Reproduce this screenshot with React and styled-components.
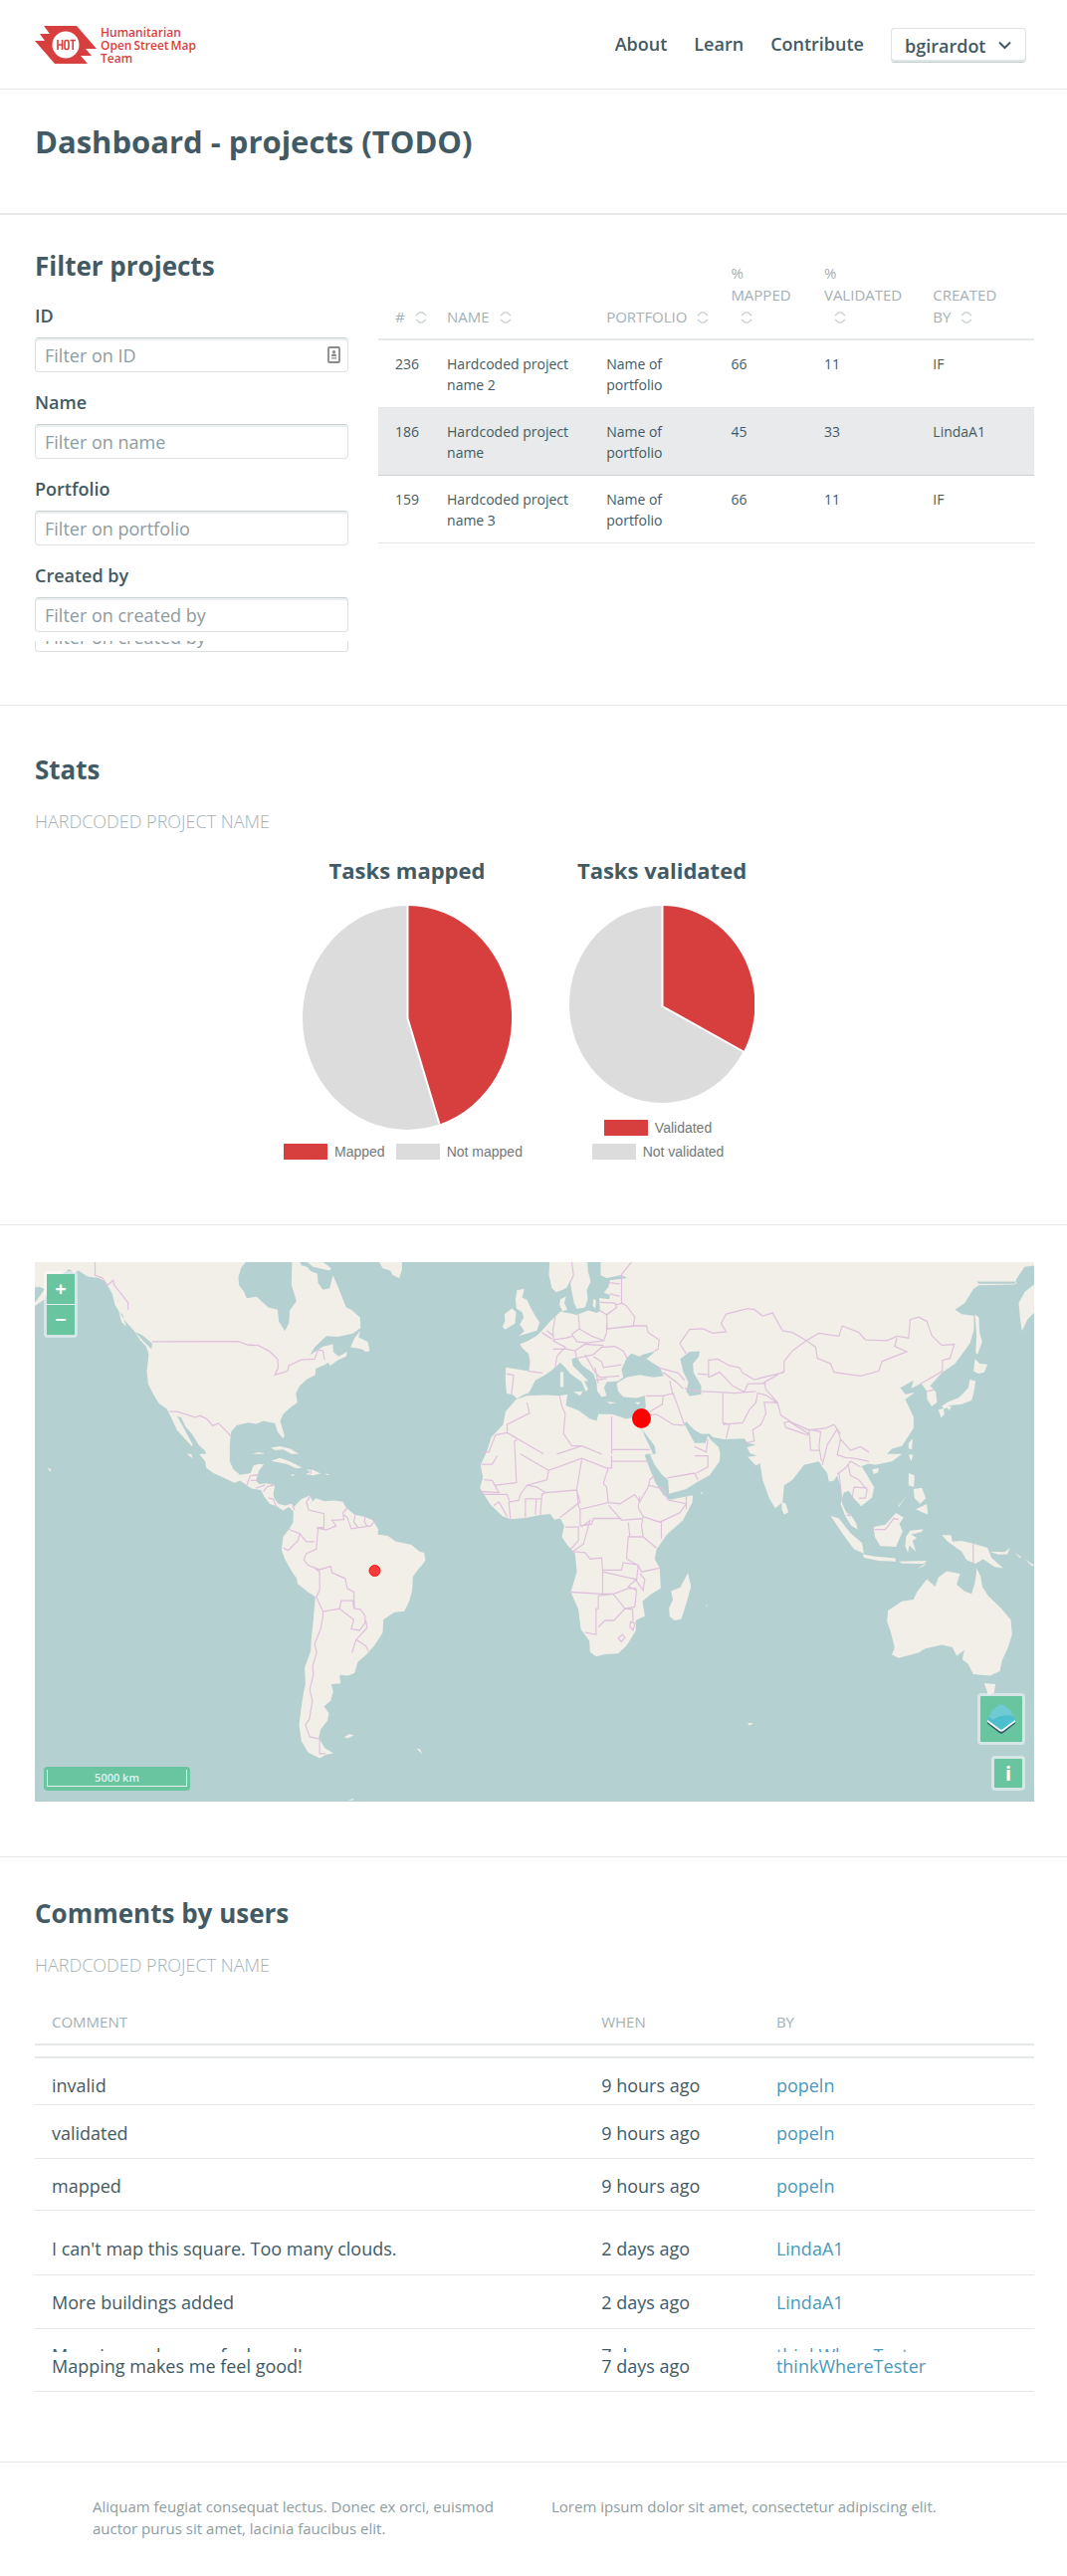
import React from "react";
import styled, { createGlobalStyle, css } from "styled-components";

const c = {
  ink: "#425a64",
  muted: "#a5b0b4",
  soft: "#8d9ca1",
  line: "#e4e8e8",
  rule: "#e6e7e7",
  red: "#d73f3f",
  grey: "#dcdcdc",
  link: "#4a9ab8",
  green: "#68c5a0",
};

const GlobalStyle = createGlobalStyle`
  *, *::before, *::after { box-sizing: border-box; }
  body {
    margin: 0;
    background: #fff;
    color: ${c.ink};
    font-family: "Open Sans", "Noto Sans", sans-serif;
    font-size: 18px;
    line-height: 24px;
  }
`;

const Header = styled.header`
  display: flex;
  justify-content: space-between;
  align-items: flex-start;
  height: 90px;
  padding: 26px 41px 0 35px;
  border-bottom: 1px solid ${c.rule};
`;

const Brand = styled.a`
  display: flex;
  gap: 4px;
  color: ${c.red};
  text-decoration: none;
`;

const BrandMark = styled.svg`
  width: 62px;
  height: 38px;
`;

const BrandText = styled.span`
  display: flex;
  flex-direction: column;
  font-size: 12px;
  font-weight: 600;
  line-height: 13px;
`;

const BrandLine = styled.span`
  display: flex;
  gap: 2px;
`;

const Nav = styled.nav`
  display: flex;
  gap: 27px;
  align-items: flex-start;
  padding-top: 2px;
`;

const NavLink = styled.a`
  color: ${c.ink};
  font-weight: 600;
  line-height: 32px;
  text-decoration: none;
`;

const UserButton = styled.button`
  display: flex;
  align-items: center;
  justify-content: space-between;
  gap: 12px;
  width: 136px;
  height: 35px;
  padding: 0 14px 0 13px;
  border: 1px solid #dde2e3;
  border-bottom-color: #c3cdce;
  border-radius: 4px;
  background: #fff;
  box-shadow: inset 0 -2px 0 #e1e6e7;
  color: ${c.ink};
  font: 600 18px/24px "Open Sans", "Noto Sans", sans-serif;
`;

const Section = styled.section`
  padding: ${(p) => p.$pad};
  border-bottom: ${(p) => p.$rule || 1}px solid ${c.rule};
`;

const PageTitle = styled.h1`
  margin: 0;
  font-size: 31px;
  line-height: 40px;
`;

const Heading = styled.h2`
  margin: 0;
  font-size: 26px;
  line-height: 36px;
`;

const ProjectName = styled.p`
  margin: 22px 0 0;
  color: ${c.muted};
  font-weight: 300;
  text-transform: uppercase;
`;

const Projects = styled.div`
  display: grid;
  grid-template-columns: 315fr 659fr;
  gap: 30px;
  align-items: start;
`;

const FieldList = styled.div`
  display: flex;
  flex-direction: column;
  gap: 18px;
  margin: 20px 0 9px;
`;

const Field = styled.div`
  display: flex;
  flex-direction: column;
  gap: 10px;
`;

const Label = styled.label`
  font-weight: 600;
`;

const inputBox = css`
  width: 100%;
  height: 35px;
  padding: 0 9px;
  border: 1px solid #dde2e2;
  border-top-color: #c8d2d2;
  border-radius: 4px;
  background: #fff;
  box-shadow: inset 0 2px 0 #eaeeee;
  font: 400 18px/24px "Open Sans", "Noto Sans", sans-serif;
`;

const InputWrap = styled.div`
  display: grid;
  align-items: center;
  > * { grid-area: 1 / 1; }
  > svg { justify-self: end; margin-right: 8px; }
`;

const Input = styled.input`
  ${inputBox}
  color: ${c.ink};
  &::placeholder { color: ${c.soft}; opacity: 1; }
`;

const InputTail = styled.div`
  display: flex;
  align-items: flex-end;
  height: 11px;
  overflow: hidden;
  color: ${c.soft};
  span {
    ${inputBox}
    flex: none;
    line-height: 39px;
  }
`;

const Table = styled.table`
  width: 100%;
  border-collapse: separate;
  border-spacing: 0;
  table-layout: fixed;
`;

const Col = styled.col`
  width: ${(p) => p.$w}%;
`;

const Th = styled.th`
  padding: 14px 0 11px 17px;
  border-bottom: 2px solid ${c.line};
  color: ${c.muted};
  font-size: 15px;
  font-weight: 400;
  line-height: 22px;
  text-align: left;
  text-transform: uppercase;
  vertical-align: bottom;
  svg { margin-left: 10px; vertical-align: -2px; }
`;

const ProjectRow = styled.tr`
  background: ${(p) => (p.$active ? "#e8eaeb" : "transparent")};
  td {
    padding: 13px 10px 12px 17px;
    border-bottom: 1px solid ${(p) => (p.$active ? "#cfd3d5" : c.rule)};
    font-size: 14px;
    line-height: 21px;
    vertical-align: top;
  }
`;

const Charts = styled.div`
  display: flex;
  justify-content: center;
  margin-top: 22px;
`;

const Chart = styled.figure`
  display: flex;
  flex-direction: column;
  align-items: center;
  width: 256px;
  margin: 0;
`;

const ChartTitle = styled.figcaption`
  margin-bottom: 21px;
  font-size: 22px;
  font-weight: 700;
  line-height: 30px;
`;

const Legend = styled.ul`
  display: flex;
  flex-wrap: wrap;
  justify-content: center;
  gap: 8px 11px;
  margin: auto 0 0;
  padding: 14px 8px 0 0;
  list-style: none;
`;

const LegendItem = styled.li`
  display: flex;
  gap: 7px;
  color: #777;
  font: 14px/16px "Liberation Sans", Arial, sans-serif;
  &::before {
    content: "";
    width: 44px;
    height: 16px;
    background: ${(p) => p.$color};
  }
`;

const MapBox = styled.div`
  position: relative;
  height: 542px;
  overflow: hidden;
  background: #b5d0d0;
`;

const MapSvg = styled.svg`
  display: block;
  width: 100%;
  height: 100%;
`;

const control = css`
  position: absolute;
  border: 3px solid rgba(255, 255, 255, 0.45);
  border-radius: 4px;
  background: ${c.green};
  background-clip: padding-box;
`;

const ZoomControl = styled.div`
  ${control}
  top: 9px;
  left: 9px;
  display: flex;
  flex-direction: column;
  gap: 1px;
  background: rgba(255, 255, 255, 0.6);
  background-clip: padding-box;
`;

const MapButton = styled.button`
  width: 28px;
  height: 30px;
  padding: 0;
  border: 0;
  background: ${c.green};
  color: #fff;
  font: 700 20px/28px "Open Sans", sans-serif;
`;

const LayersButton = styled.button`
  ${control}
  right: 9px;
  bottom: 57px;
  display: flex;
  align-items: center;
  justify-content: center;
  width: 48px;
  height: 52px;
  padding: 0;
`;

const InfoButton = styled.button`
  ${control}
  right: 9px;
  bottom: 11px;
  width: 34px;
  height: 35px;
  padding: 0;
  color: #fff;
  font: 700 20px/26px "Open Sans", sans-serif;
`;

const ScaleBar = styled.div`
  position: absolute;
  left: 9px;
  bottom: 11px;
  width: 147px;
  height: 24px;
  padding: 3px;
  border-radius: 4px;
  background: ${c.green};
  div {
    height: 17px;
    border: 1px solid #eee;
    border-top: 0;
    color: #e3f2ec;
    font-size: 11px;
    font-weight: 600;
    line-height: 16px;
    text-align: center;
  }
`;

const CommentsTable = styled(Table)`
  margin-top: 20px;
`;

const RuleRow = styled.tr`
  td {
    height: 13px;
    padding: 0;
    border-bottom: 2px solid ${c.line};
  }
`;

const CommentRow = styled.tr`
  td {
    padding: ${(p) => p.$top}px 10px ${(p) => p.$bottom}px 17px;
    border-bottom: 1px solid ${c.rule};
    vertical-align: top;
  }
`;

const Peek = styled.div`
  height: 6px;
  margin-bottom: 2px;
  overflow: hidden;
  line-height: 18px;
`;

const Link = styled.a`
  color: ${c.link};
  text-decoration: none;
`;

const Footer = styled.footer`
  display: grid;
  grid-template-columns: 1fr 1fr;
  gap: 36px;
  padding: 33px 93px 36px;
  color: ${c.soft};
  font-size: 15px;
  line-height: 22px;
  p { margin: 0; }
`;

const SortIcon = () => (
  <svg width="12" height="14" viewBox="0 0 12 14" fill="none" stroke="#cdd3d4" strokeWidth="1.6" aria-hidden="true">
    <path d="M1 5 L4.5 2 H7.5 L11 5 M1 9 L4.5 12 H7.5 L11 9" />
  </svg>
);

const ContactIcon = () => (
  <svg width="13" height="17" viewBox="0 0 13 17" aria-hidden="true">
    <rect x="1" y="1" width="11" height="15" rx="1" fill="#fff" stroke="#8b8b8b" strokeWidth="1.8" />
    <circle cx="6.5" cy="5.6" r="1.6" fill="#8b8b8b" />
    <path d="M4 10 V8.8 Q4 7.4 6.5 7.4 T9 8.8 V10 Z M4 11.2 H9 V12.6 H4 Z" fill="#8b8b8b" />
  </svg>
);

const LayersIcon = () => (
  <svg width="30" height="32" viewBox="0 0 30 32" aria-hidden="true">
    <path d="M1 19 L15 28 L29 19 V20.500 L17 30 Q15 31.500 13 30 L1 20.500Z" fill="#33576b" />
    <path d="M1 16 L15 27 L29 16 V19 L17 28 Q15 29.500 13 28 L1 19Z" fill="#eef7f8" />
    <path d="M2 14 Q0 16 2 17.500 L13 25.500 Q15 27 17 25.500 L28 17.500 Q30 16 28 14 L15 9Z" fill="#4cbfce" />
    <path d="M4 8 L8 6 Q12 1.500 15 1.500 T22 6 L26 8 L24 8.500 L28 12.500 Q12 11 7 17 L2 14 L6 8.500Z" fill="#70cad3" />
  </svg>
);

function Pie({ w, h, cx, cy, end, label }) {
  return (
    <svg width={w} height={h} viewBox={`0 0 ${w} ${h}`} role="img" aria-label={label}>
      <ellipse cx={w / 2} cy={h / 2} rx={w / 2} ry={h / 2} fill={c.grey} />
      <path d={`M${cx} ${cy} V0 A${w / 2} ${h / 2} 0 0 1 ${end[0]} ${end[1]} Z`} fill={c.red} />
      <path d={`M${cx} 0 V${cy} L${end[0]} ${end[1]}`} fill="none" stroke="#fff" strokeWidth="2" />
    </svg>
  );
}

const AMERICAS = [
  "M45 49V118L60 116 76 122 64 138 45 160 47 168 76 150 84 130 100 112 125 84 150 68 165 78 178 72 205 88 240 92 258 102 268 116 280 135 288 165 305 190 325 215 345 235 365 262 382 278 390 300 384 345 388 380 405 410 420 432 445 448 458 472 475 505 500 530 521 550 522 544 505 516 490 490 476 468 488 471 500 495 520 515 540 545 560 562 562 570H542L560 590 563 608 585 622 620 636 648 648 665 642 685 655 700 664 728 668 738 686 755 706 775 712 795 723 812 714 826 726 829 714 820 705 800 710 780 705 768 690 765 680 770 655 745 650 722 652 713 642 722 615 737 598 720 597 705 602 697 622 665 627 645 612 634 590 634 545 638 510 655 492 690 485 715 488 735 480 770 487 778 510 795 528 799 520 792 500 786 480 795 462 815 445 838 430 833 405 845 385 865 368 892 355 893 338 920 328 946 312 930 320 936 331 960 315 985 305 988 292 962 305 946 293 945 272 915 278 875 302 890 280 925 250 960 252 1005 243 1028 228 1027 200 1000 178 985 172 975 150 960 115 945 85 935 120 915 124 900 105 898 80 880 75 866 62 850 58 845 49H822L820 110 835 155 815 180 812 215 800 236 782 210 778 178 750 172 715 143 685 147 676 128 662 112 660 90 668 65 682 49Z",
  "M868 49L885 62 935 72 940 66 915 49Z",
  "M998 280L1010 255 1028 235 1022 253 1050 265 1056 290 1045 293 1030 285Z",
  "M1085 49L1095 66 1118 72 1125 84 1145 93 1153 70V49Z",
  "M758 553L785 549 815 555 842 570H820L795 558 770 560Z",
  "M758 589L785 581 815 590 852 607 835 609 805 597Z",
  "M866 612L885 613 908 623 885 628 862 625 876 620Z",
  "M702 570L720 565 738 568 736 570ZM818 625L833 627 822 630ZM920 624L935 625 930 628Z",
  "M505 570L518 570 522 582ZM85 607L96 612 92 618ZM980 1338L995 1330 1008 1334 988 1342ZM1196 1369L1208 1372 1214 1384ZM990 1511L1008 1505 1006 1510Z",
  "M300 185L312 192 322 224 308 212ZM348 238L372 248 400 270 398 285 372 262Z",
  "M826 726L829 712 850 692 875 683 884 698 878 706 893 690 920 698 950 696 975 700 985 716 1010 735 1040 740 1065 750 1082 775 1080 788 1110 792 1135 808 1180 816 1205 834 1220 838 1224 858 1215 870 1203 882 1186 903 1184 940 1175 970 1160 997 1130 1000 1097 1020 1095 1055 1070 1090 1045 1115 1020 1135 1010 1165 990 1172 965 1170 968 1193 940 1195 946 1215 938 1240 918 1255 933 1275 928 1295 908 1318 902 1340 920 1368 946 1383 925 1386 905 1396 870 1380 850 1350 843 1305 850 1255 856 1220 862 1195 860 1150 878 1105 880 1070 886 1020 892 958 870 945 838 922 836 908 825 895 800 855 790 830 795 795 812 775 825 755Z",
].join("");

const AMERICAS_BORDERS =
  "M228 49V85L250 92 265 112 283 98 285 110 328 160V178M400 265L660 264 690 274 720 275 755 292 778 312 780 335 770 355 808 345 812 330 850 314 890 312 900 287 915 290 920 315M452 455H475L530 470 545 466 565 475 583 493 600 487 615 500 638 522M685 655L695 630 722 626M697 642L718 642M712 663L740 655M735 672L748 658 768 655M750 690L765 692 774 712M823 710L829 722M878 683L865 700 872 722 918 732V770L900 770 895 828 865 840 857 856 870 872 905 884 938 875 942 892 982 908 988 935 1008 945 1010 990 1028 992 1042 1010V1030M895 770L925 776 955 765 942 750 978 748 975 730 990 714M978 735L988 742 1000 773 1060 765 1072 750M1012 736L1008 755 1020 768M1042 738L1040 755 1050 768M810 774L845 786 865 808H890M845 786L840 805 810 832 795 825M890 880L905 890V940L895 958 915 998 965 990 970 968H1005L1008 990M915 998V1010L908 1045 890 1085 896 1110 884 1145 886 1170 875 1210 883 1240 874 1290 862 1305 875 1338 905 1344V1384H922M965 990L1008 1020 1000 1045 1025 1049 1045 1025 1048 1042 1015 1074 1002 1110M1015 1074L1045 1092 1052 1105M878 612V625";

const OLD_WORLD = [
  "M68 49L66 85 75 120 88 131 108 124 120 118 130 100 135 130 142 160 150 176 175 172 183 150 180 125 192 102 184 75 182 49Z",
  "M222 49V85L240 92 285 84 302 92 250 98 246 115 232 132 250 138 248 150 218 146 220 182 210 187 185 180 150 192 130 188 108 185 98 165 100 150 118 142 112 160 122 178 100 184 88 194 70 210 45 235 30 248 5 262-22 272-12 284 5 298 9 318 6 345-64 335-65 370-62 405-42 410-30 420-12 410 5 404 15 388 25 370 50 358 72 345 100 322 115 335 130 352 165 375 178 402 184 392 172 372 185 372 155 345 138 330 135 312 150 308 165 328 200 352 210 378 212 400 225 415 240 412 232 390 240 375 275 372 290 362 285 340 300 310 315 297 338 305 350 300 388 290 360 312 400 335 412 358 380 362 340 355 300 362 270 378 275 400 290 415 330 418 355 412 358 440 350 465 340 500 362 530 385 570H358L375 600 400 625 423 645 428 678 480 665 515 645 550 628 580 590 582 570 578 552 552 530 545 520 538 540 505 540 490 515 474 488 480 482 505 505 525 515 550 515 560 525 595 530 655 528 665 540 690 545 663 552 672 568 692 575 665 578 690 602 702 595 710 640 730 690 748 717 770 702 775 655 800 640 835 600 880 590 890 605 905 622 910 645 925 642 935 628 945 660 950 705 962 728 978 738 992 758 996 775 978 765 960 740 945 705 955 675 970 670 985 690 1007 712 1040 688 1046 660 1020 620 1008 603 1030 596 1050 600 1100 590 1130 570H1085L1100 556 1130 548 1165 500V470L1150 440 1140 422 1168 403 1140 408 1125 390 1165 370 1158 392 1188 378 1205 400 1206 422 1220 440 1236 430 1232 402 1215 385 1250 350 1290 325 1335 270 1347 232V195L1310 190 1290 178 1320 160 1345 122 1362 112 1470 110 1475 95 1500 62 1530 58V49Z",
  "M1355 102H1475V108H1362Z",
  "M1530 108L1500 130 1482 160 1486 200 1492 236 1508 205 1530 185Z",
  "M1350 190L1362 200 1364 240 1372 265 1358 300 1352 295 1355 250Z",
  "M1350 312L1365 325 1388 327 1378 348 1360 352 1346 345Z",
  "M1335 368L1352 372 1346 405 1340 425 1310 435 1275 438 1258 448 1250 440 1270 428 1300 418 1318 402 1330 390Z",
  "M1240 450L1255 446 1258 462 1248 472ZM1265 442L1280 440 1272 452Z",
  "M-33 422L0 412 60 410 98 412 122 408 117 438 155 452 190 475 210 480 215 462 255 462 300 475 345 465 342 500 362 535 385 570 355 575 370 610 388 650 412 682 430 694 500 682 498 702 470 750 420 790 390 830 385 855 400 880 403 935 375 950 348 970 355 1010 328 1022 328 1050 300 1090 275 1112 235 1114 208 1120 190 1108 188 1078 162 1045 155 992 132 945 150 890 145 840 120 815 105 795 112 765 100 745 82 748 70 733 35 736 0 743-50 747-75 738-110 708-142 662-133 635-140 600-120 560-108 525-72 490-65 455Z",
  "M-30 125L-8 122-15 145 0 152 12 175 27 198 38 212 30 235-25 250-8 236-22 218-10 200-15 185-32 175-35 150Z",
  "M-68 190L-45 175-33 185-36 215-65 232-74 225-66 208Z",
  "M100 348L110 346V388H100ZM140 402L168 400 160 412ZM240 428L270 430 250 434ZM325 430L342 429 335 436ZM200 150L208 152 206 175 198 168Z",
  "M485 893L494 930 482 970 465 1018 445 1022 430 1012 428 988 440 965 434 942 462 932Z",
  "M768 700L780 705 788 728 775 735 768 720Z",
  "M915 738L940 745 975 785 1010 812 1015 840 985 828 950 785ZM1012 842L1050 848 1110 853 1112 862 1060 860 1015 852ZM1120 862L1205 860 1195 868 1130 867ZM1175 882L1205 865 1195 875Z",
  "M1045 768L1080 762 1112 730 1135 742 1122 760 1132 780 1112 822 1065 820 1048 795Z",
  "M1142 795L1155 778 1195 774 1188 782 1158 788 1175 798 1162 805 1172 835 1152 818 1148 838 1140 820Z",
  "M1150 622L1168 628 1166 660 1150 655ZM1165 665L1190 662 1202 690 1185 705 1168 690ZM1172 720L1205 706 1208 734 1190 728ZM1118 712L1145 682 1120 714Z",
  "M1150 540L1162 528 1160 558 1150 555ZM1150 572L1164 572 1158 590ZM1040 612L1060 608 1058 620 1045 625Z",
  "M1250 790L1278 790 1282 808 1310 806 1345 813 1388 825 1400 852 1435 880 1408 876 1375 855 1352 868 1325 858 1310 835 1268 808ZM1395 835L1440 836 1455 825 1448 842 1420 843ZM1470 838L1490 850 1485 852ZM1500 855L1528 872 1522 875Z",
  "M1088 995L1130 970 1165 965 1175 945 1205 910 1230 930 1240 905 1265 888 1305 895 1295 925 1318 942 1340 950 1350 920 1356 880 1368 905 1372 930 1390 955 1430 990 1458 1020 1462 1060 1450 1095 1432 1130 1425 1160 1395 1172 1345 1168 1330 1140 1312 1128 1318 1103 1295 1118 1282 1095 1250 1088 1200 1098 1180 1110 1120 1124 1100 1115 1108 1095 1095 1050 1085 1025Z",
  "M1378 1192L1412 1195 1408 1218 1390 1224Z",
  "M665 1300L682 1301 670 1308ZM538 981L545 980 542 984ZM522 675H532L526 679Z",
].join("");

const OLD_WORLD_BORDERS =
  "M135 49L140 85 130 105M315 49L285 82V160L300 168 325 198 320 222 360 222 365 240 398 260 395 285 385 290M245 105L280 108M250 135L280 142M220 158L265 160 270 172 240 192 220 180M240 192L242 230 325 222M265 165L290 160M155 192L158 230 195 250 232 262 240 240V215M158 230L135 245 150 265 180 268 232 262M85 195L78 235 80 260 118 255 137 250M60 235L80 250M45 240L75 258M78 285L120 285 145 290 175 272 230 275M78 262L115 280 90 305 85 335M145 290L150 310 200 300 225 280 265 278 290 290 302 310M175 300L205 348 220 362 278 358M200 305L225 320 230 335 285 328M205 335L215 378M205 370L240 365M5 345L47 350M-62 352L-40 356-47 408M460 270L490 232 530 230 560 242 600 238 585 215 600 190 665 175 685 178 710 195 740 187 770 235 800 240 842 262 880 242 940 250 950 222 1000 240 1020 260 1085 262 1115 250 1150 255 1155 205 1180 198 1205 210 1220 248 1250 275 1288 272 1275 310 1252 315V345L1185 380M842 262L870 280 875 310 915 325 925 348 1005 358 1060 345 1070 318 1145 292 1108 278 1115 255M842 262L800 290 775 318V345L715 375 720 395 755 430 765 465 800 485 850 505 900 500 925 490 945 515M460 270L480 298M547 362V315L575 312 610 330 640 335 650 350 685 368 775 348M547 362L580 348 620 385 655 402 665 380 720 378M515 352L545 355M525 400L580 402 625 405 690 400M590 405V485L610 490 600 528M590 490L650 485 670 450 690 430 695 405 720 410 755 432 740 430 715 430 720 460 705 490 680 505 685 535 660 540M775 485L790 482 850 515 845 518 780 498ZM850 502L855 560H880M860 505L885 510 880 550 888 590M890 600L905 545 935 502 945 530 975 560 1005 550 1030 565M945 530L935 572 960 580 985 582 1030 590M935 625L960 608 975 590 1005 605M940 620L950 700M968 600L975 628 1000 640 1025 668 1020 690 1000 690M985 660L1025 662M985 660L980 690M358 412L410 412 440 405 455 440 470 480 475 492M410 412L408 435 370 455M370 465L390 462 440 490 472 492M395 335L455 350 475 370M410 348L450 375 470 392M430 372L440 410M520 400L475 392M422 635L505 622 515 640M510 622L545 605V575L505 575M545 530L540 565 505 550M255 468V570M255 558H370M255 590H368M255 575V608L240 608M240 608L165 582 65 615-20 570M225 570L165 548 90 570M98 412L105 440 115 460 110 515 135 548 165 548M0 430L8 462M-60 512L50 570M-60 512V490L5 460M-30 532L-38 535-32 648-95 655M-60 512L-95 518-115 565H-138M-138 598H-105L-90 575M-130 640L-105 642-85 675-140 672M-130 680L-60 680-52 700-25 696-20 680 0 655 60 640 65 615M0 655L30 660 55 675 150 668 160 700 100 742M-100 710L-85 700-75 715-60 740M-50 747L-55 700M-5 742V692L45 692M25 735L28 692M40 735L45 680 55 675M165 585L150 665 155 710 160 720 245 702 240 660 230 650 245 608M245 702L280 705 325 680 340 700 365 660 370 640 385 628M365 655L410 665 425 695 480 705 460 730 400 755 350 740 335 715 340 685M480 685L480 720M350 740L345 765 350 795 305 795 300 855M245 708L285 750 350 745M160 720L160 765 195 760 200 745 285 745M115 768H155V805L130 830M165 768L190 750 170 815 138 835 175 838 190 855 225 852 228 885 285 885 290 865 330 870M228 885V948M132 945L225 950 260 950 305 935 330 935M305 755L310 795M350 795L390 825M405 755V800M300 855L335 872 345 890 400 880M335 872L330 915 350 940 355 910 340 895M228 890L300 905 330 910 305 930 330 940 325 985 295 990 260 950 215 955V990H208V1060L175 1055M215 1040L235 1022 262 1022 295 990 318 992 320 1025M312 1025L325 1030 320 1048 310 1040ZM275 1070L288 1060 295 1068 285 1080ZM1345 813V868M1048 775L1080 775 1105 745 1120 748M962 735L975 738M1205 400L1225 396";

function WorldMap() {
  return (
    <MapSvg viewBox="0 0 1005 542" preserveAspectRatio="xMidYMid slice" role="img" aria-label="World map">
      <g transform="translate(-15 -18.130) scale(.33333 .37)">
        <path d={AMERICAS} fill="#f2efe8" />
        <path d={AMERICAS_BORDERS} fill="none" stroke="#dfc0dc" strokeWidth="3.500" />
      </g>
      <g transform="translate(495 -18.130) scale(.33333 .37)">
        <path d={OLD_WORLD} fill="#f2efe8" />
        <path d="M462 312L490 292 520 291 518 305 500 325 502 350 525 385 525 408 490 413 480 400 486 375 470 345Z" fill="#b5d0d0" />
        <path d="M345 500L365 525 385 548 388 570H380ZM355 572H370L385 600 405 625 425 640 428 680 440 694 420 685 395 655 378 625Z" fill="#b5d0d0" />
        <path d={OLD_WORLD_BORDERS} fill="none" stroke="#dfc0dc" strokeWidth="3.500" />
      </g>
      <circle cx="342" cy="310" r="5.500" fill="#ff3a3a" stroke="#ff1414" />
      <ellipse cx="610" cy="157" rx="9.500" ry="10" fill="#f00" />
    </MapSvg>
  );
}

const FILTERS = [
  { id: "id", label: "ID", hint: "Filter on ID", icon: true },
  { id: "name", label: "Name", hint: "Filter on name" },
  { id: "portfolio", label: "Portfolio", hint: "Filter on portfolio" },
  { id: "created", label: "Created by", hint: "Filter on created by" },
];

const PROJECTS = [
  ["236", "Hardcoded project name 2", "Name of portfolio", "66", "11", "IF"],
  ["186", "Hardcoded project name", "Name of portfolio", "45", "33", "LindaA1"],
  ["159", "Hardcoded project name 3", "Name of portfolio", "66", "11", "IF"],
];

const COMMENTS = [
  { text: "invalid", when: "9 hours ago", by: "popeln", top: 15, bottom: 7 },
  { text: "validated", when: "9 hours ago", by: "popeln", top: 16, bottom: 13 },
  { text: "mapped", when: "9 hours ago", by: "popeln", top: 15, bottom: 12 },
  { text: "I can't map this square. Too many clouds.", when: "2 days ago", by: "LindaA1", top: 26, bottom: 14 },
  { text: "More buildings added", when: "2 days ago", by: "LindaA1", top: 15, bottom: 14 },
  { text: "Mapping makes me feel good!", when: "7 days ago", by: "thinkWhereTester", top: 17, bottom: 13, peek: true },
];

export default function App() {
  return (
    <>
      <GlobalStyle />
      <Header>
        <Brand href="#home">
          <BrandMark viewBox="0 0 62 38" aria-hidden="true">
            <path d="M9 0H42L62 23H51L57 30H46L53 38H20L0 15H10L5 8H15Z" fill={c.red} />
            <circle cx="31" cy="19" r="13.500" fill="#fff" />
            <path d="M23 14V24M27.500 14V24M23 19H27.500M35.500 14.500H41M38.200 14V24" fill="none" stroke={c.red} strokeWidth="1.600" />
            <rect x="30" y="14.500" width="4" height="9" rx="1.800" fill="none" stroke={c.red} strokeWidth="1.600" />
          </BrandMark>
          <BrandText>
            <BrandLine>Humanitarian</BrandLine>
            <BrandLine>
              <span>Open</span>
              <span>Street</span>
              <span>Map</span>
            </BrandLine>
            <BrandLine>Team</BrandLine>
          </BrandText>
        </Brand>
        <Nav>
          <NavLink href="#about">About</NavLink>
          <NavLink href="#learn">Learn</NavLink>
          <NavLink href="#contribute">Contribute</NavLink>
          <UserButton type="button">
            bgirardot
            <svg width="13" height="9" viewBox="0 0 13 9" fill="none" stroke={c.ink} strokeWidth="2" aria-hidden="true">
              <path d="M1 1.500 L6.500 7 L12 1.500" />
            </svg>
          </UserButton>
        </Nav>
      </Header>

      <main>
        <Section $pad="32px 33px 52px 35px" $rule={2}>
          <PageTitle>Dashboard - projects (TODO)</PageTitle>
        </Section>

        <Section $pad="33px 33px 53px 35px">
          <Projects>
            <form>
              <Heading>Filter projects</Heading>
              <FieldList>
                {FILTERS.map((f) => (
                  <Field key={f.id}>
                    <Label htmlFor={f.id}>{f.label}</Label>
                    <InputWrap>
                      <Input id={f.id} type="text" placeholder={f.hint} />
                      {f.icon && <ContactIcon />}
                    </InputWrap>
                  </Field>
                ))}
              </FieldList>
              <InputTail aria-hidden="true">
                <span>Filter on created by</span>
              </InputTail>
            </form>
            <Table>
              <colgroup>
                {[7.9, 24.3, 19, 14.2, 16.6, 18].map((w, i) => (
                  <Col key={i} $w={w} />
                ))}
              </colgroup>
              <thead>
                <tr>
                  <Th>#<SortIcon /></Th>
                  <Th>Name<SortIcon /></Th>
                  <Th>Portfolio<SortIcon /></Th>
                  <Th>%<br />Mapped<br /><SortIcon /></Th>
                  <Th>%<br />Validated<br /><SortIcon /></Th>
                  <Th>Created<br />by<SortIcon /></Th>
                </tr>
              </thead>
              <tbody>
                {PROJECTS.map((row) => (
                  <ProjectRow key={row[0]} $active={row[0] === "186"}>
                    {row.map((cell, i) => (
                      <td key={i}>{cell}</td>
                    ))}
                  </ProjectRow>
                ))}
              </tbody>
            </Table>
          </Projects>
        </Section>

        <Section $pad="46px 33px 65px 35px">
          <Heading>Stats</Heading>
          <ProjectName>Hardcoded project name</ProjectName>
          <Charts>
            <Chart>
              <ChartTitle>Tasks mapped</ChartTitle>
              <Pie w={210} h={225} cx={105.5} cy={113} end={[137.5, 219.5]} label="45% mapped" />
              <Legend>
                <LegendItem $color={c.red}>Mapped</LegendItem>
                <LegendItem $color={c.grey}>Not mapped</LegendItem>
              </Legend>
            </Chart>
            <Chart>
              <ChartTitle>Tasks validated</ChartTitle>
              <Pie w={186} h={198} cx={93.5} cy={101} end={[175, 146.5]} label="33% validated" />
              <Legend>
                <LegendItem $color={c.red}>Validated</LegendItem>
                <LegendItem $color={c.grey}>Not validated</LegendItem>
              </Legend>
            </Chart>
          </Charts>
        </Section>

        <Section $pad="37px 33px 55px 35px">
          <MapBox>
            <WorldMap />
            <ZoomControl>
              <MapButton type="button" aria-label="Zoom in">+</MapButton>
              <MapButton type="button" aria-label="Zoom out">−</MapButton>
            </ZoomControl>
            <ScaleBar>
              <div>5000 km</div>
            </ScaleBar>
            <LayersButton type="button" aria-label="Layers">
              <LayersIcon />
            </LayersButton>
            <InfoButton type="button" aria-label="Attributions">i</InfoButton>
          </MapBox>
        </Section>

        <Section $pad="38px 33px 70px 35px">
          <Heading>Comments by users</Heading>
          <ProjectName>Hardcoded project name</ProjectName>
          <CommentsTable>
            <colgroup>
              <Col $w={55} />
              <Col $w={17.5} />
              <Col $w={27.5} />
            </colgroup>
            <thead>
              <tr>
                <Th>Comment</Th>
                <Th>When</Th>
                <Th>By</Th>
              </tr>
            </thead>
            <tbody>
              <RuleRow aria-hidden="true">
                <td colSpan={3} />
              </RuleRow>
              {COMMENTS.map((m) => (
                <CommentRow key={m.text} $top={m.top} $bottom={m.bottom}>
                  <td>
                    {m.peek && <Peek aria-hidden="true">{m.text}</Peek>}
                    {m.text}
                  </td>
                  <td>
                    {m.peek && <Peek aria-hidden="true">{m.when}</Peek>}
                    {m.when}
                  </td>
                  <td>
                    {m.peek && (
                      <Peek aria-hidden="true">
                        <Link as="span">{m.by}</Link>
                      </Peek>
                    )}
                    <Link href="#user">{m.by}</Link>
                  </td>
                </CommentRow>
              ))}
            </tbody>
          </CommentsTable>
        </Section>
      </main>

      <Footer>
        <p>Aliquam feugiat consequat lectus. Donec ex orci, euismod auctor purus sit amet, lacinia faucibus elit.</p>
        <p>Lorem ipsum dolor sit amet, consectetur adipiscing elit.</p>
      </Footer>
    </>
  );
}
